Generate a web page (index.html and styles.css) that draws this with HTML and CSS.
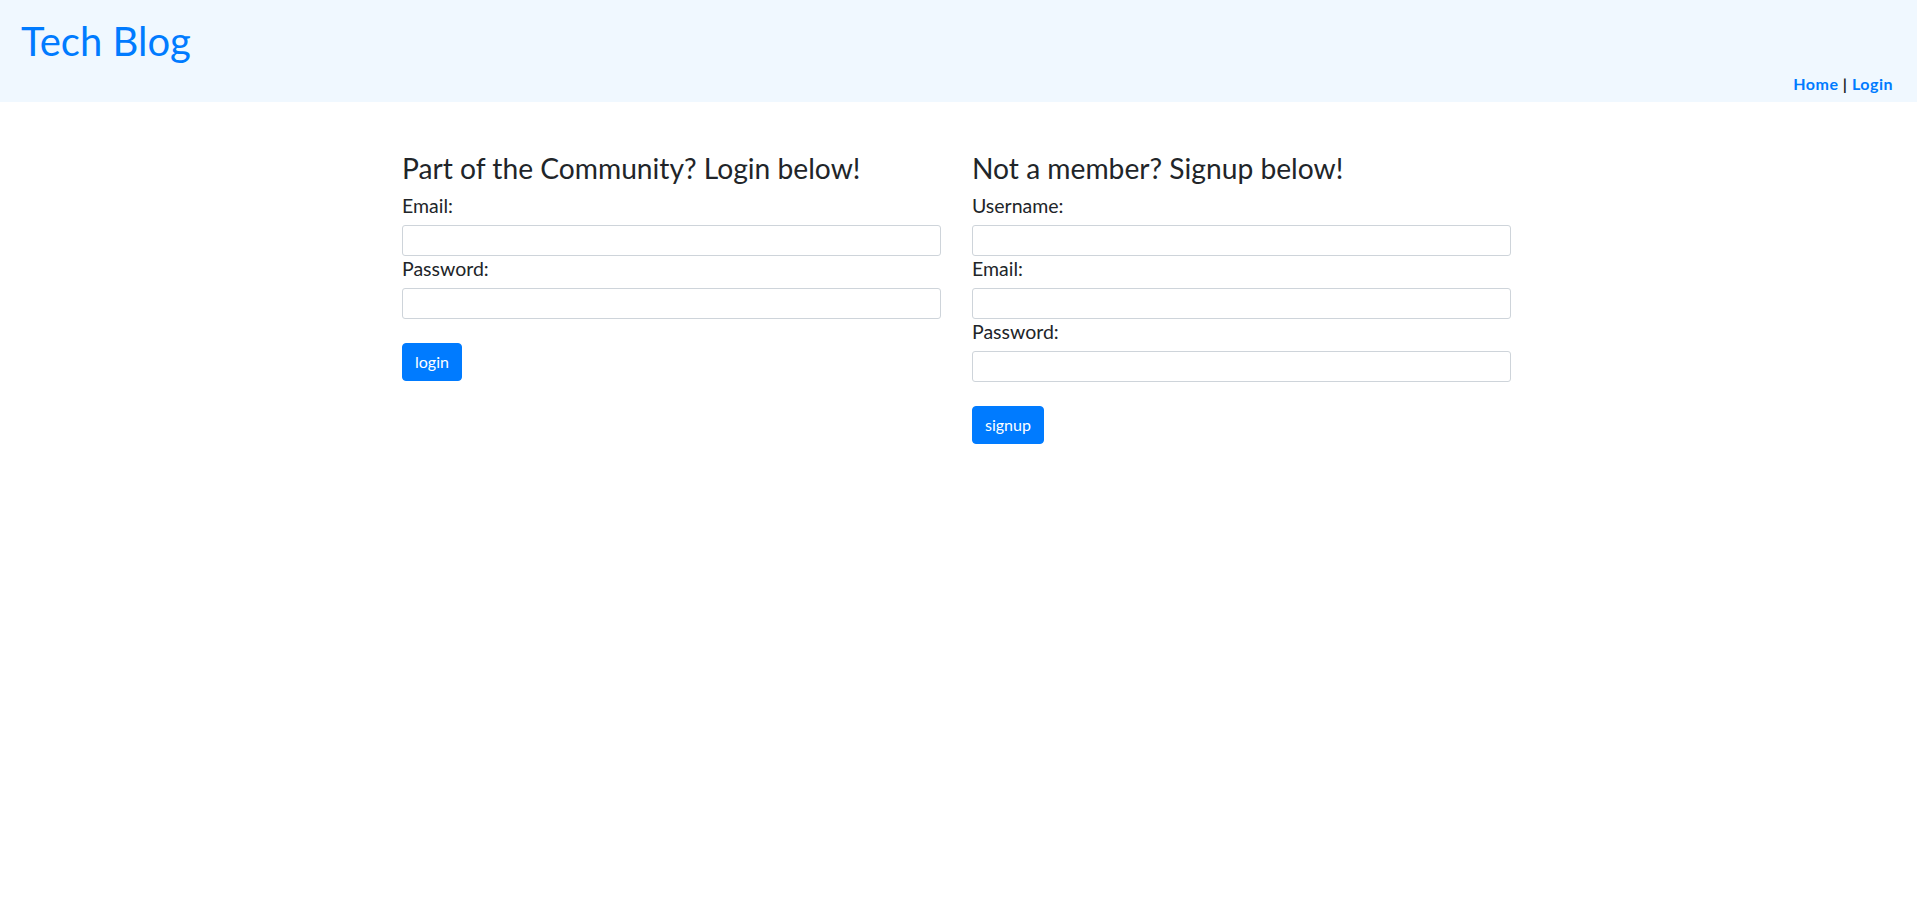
FILE: index.html
```html
<!DOCTYPE html>
<html lang="en">
<head>
<meta charset="utf-8">
<title>Tech Blog</title>
<link rel="stylesheet" href="styles.css">
</head>
<body>
<header class="site-header">
  <h1 class="brand">Tech Blog</h1>
  <nav class="nav"><a href="#" class="nav-link">Home</a> | <a href="#" class="nav-link">Login</a></nav>
</header>
<main class="container">
  <section class="col">
    <h3 class="form-title">Part of the Community? Login below!</h3>
    <form class="form">
      <label class="label" for="email-login">Email:</label>
      <input class="input" type="text" id="email-login">
      <label class="label" for="password-login">Password:</label>
      <input class="input" type="password" id="password-login">
      <button class="btn" type="button">login</button>
    </form>
  </section>
  <section class="col">
    <h3 class="form-title">Not a member? Signup below!</h3>
    <form class="form">
      <label class="label" for="username-signup">Username:</label>
      <input class="input" type="text" id="username-signup">
      <label class="label" for="email-signup">Email:</label>
      <input class="input" type="text" id="email-signup">
      <label class="label" for="password-signup">Password:</label>
      <input class="input" type="password" id="password-signup">
      <button class="btn" type="button">signup</button>
    </form>
  </section>
</main>
</body>
</html>
```
FILE: styles.css
```css
* { box-sizing: border-box; }
html, body { margin: 0; padding: 0; }
body {
  font-family: Lato, "Noto Sans", sans-serif;
  font-size: 16px;
  line-height: 1.5;
  color: #212529;
  background: #fff;
}
.site-header {
  background: #f0f8ff;
  height: 102px;
  padding: 17px 24px 6px 21px;
  display: flex;
  flex-direction: column;
}
.brand {
  margin: 0;
  font-size: 40px;
  font-weight: 400;
  line-height: 1.2;
  color: #007bff;
}
.nav {
  margin-top: auto;
  align-self: flex-end;
  font-weight: 700;
  font-size: 16px;
  line-height: 24px;
  letter-spacing: 0.5px;
}
.nav-link { color: #007bff; text-decoration: none; }
.container {
  width: 1113px;
  padding-right: 4px;
  margin: 50px auto 0;
  display: grid;
  grid-template-columns: 1fr 1fr;
  column-gap: 31px;
  align-items: start;
}
.form-title {
  margin: 0 0 7px;
  font-size: 28.2px;
  font-weight: 400;
  line-height: 33.6px;
}
.form { display: flex; flex-direction: column; align-items: flex-start; }
.label {
  display: block;
  padding-top: 1px;
  margin-bottom: 7px;
  font-size: 19.5px;
  line-height: 24px;
}
.input {
  display: block;
  width: 100%;
  height: 31px;
  padding: 4px 8px;
  font-size: 14px;
  font-family: inherit;
  border: 1px solid #ced4da;
  border-radius: 3px;
  background: #fff;
}
.btn {
  margin-top: 24px;
  font-family: inherit;
  font-size: 16px;
  line-height: 24px;
  padding: 6px 12px;
  color: #fff;
  background: #007bff;
  border: 1px solid #007bff;
  border-radius: 4px;
}
```
